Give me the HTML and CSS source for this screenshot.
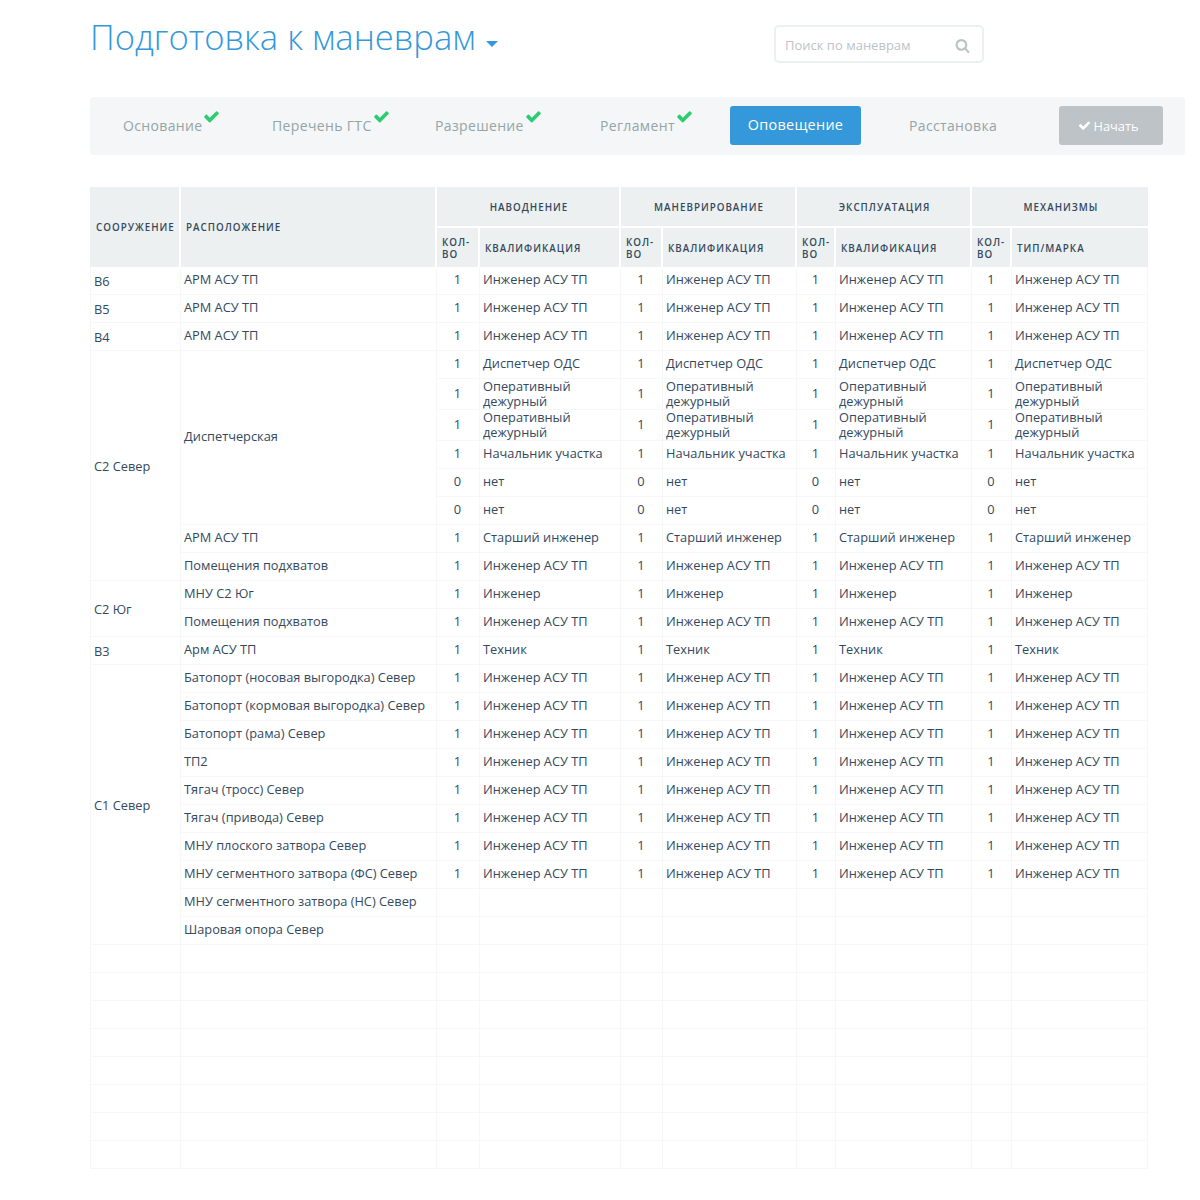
FILE: index.html
```html
<!DOCTYPE html>
<html lang="ru">
<head>
    <meta charset="UTF-8">
    <title>Подготовка к маневрам</title>
    <link rel="stylesheet" href="styles.css">
</head>
<body>
    <svg class="sprite" xmlns="http://www.w3.org/2000/svg">
        <symbol id="i-check" viewBox="0 0 1792 1792"><path d="M1671 566q0 40-28 68l-724 724-136 136q-28 28-68 28t-68-28l-136-136-362-362q-28-28-28-68t28-68l136-136q28-28 68-28t68 28l294 295 656-657q28-28 68-28t68 28l136 136q28 28 28 68z"/></symbol>
        <symbol id="i-search" viewBox="0 0 1792 1792"><path d="M1216 832q0-185-131.5-316.5t-316.5-131.5-316.5 131.5-131.5 316.5 131.5 316.5 316.5 131.5 316.5-131.5 131.5-316.5zm512 832q0 52-38 90t-90 38q-54 0-90-38l-343-342q-179 124-399 124-143 0-273.5-55.5t-225-150-150-225-55.5-273.5 55.5-273.5 150-225 225-150 273.5-55.5 273.5 55.5 225 150 150 225 55.5 273.5q0 220-124 399l343 343q37 37 37 90z"/></symbol>
    </svg>

    <div class="page">
        <div class="top">
            <h1 class="title">Подготовка к маневрам <span class="caret"></span></h1>
            <div class="search">
                <span class="search-text">Поиск по маневрам</span>
                <svg class="search-icon"><use href="#i-search"/></svg>
            </div>
        </div>

        <div class="steps">
            <div class="step">Основание<svg class="done"><use href="#i-check"/></svg></div>
            <div class="step">Перечень ГТС<svg class="done"><use href="#i-check"/></svg></div>
            <div class="step">Разрешение<svg class="done"><use href="#i-check"/></svg></div>
            <div class="step">Регламент<svg class="done"><use href="#i-check"/></svg></div>
            <div class="step-active">Оповещение</div>
            <div class="step">Расстановка</div>
            <div class="start"><svg class="start-icon"><use href="#i-check"/></svg>Начать</div>
        </div>

        <table class="grid">
            <colgroup>
                <col class="c-site"><col class="c-place">
                <col class="c-n1"><col class="c-q1">
                <col class="c-n2"><col class="c-q2">
                <col class="c-n3"><col class="c-q3">
                <col class="c-n4"><col class="c-q4">
            </colgroup>
            <thead>
                <tr class="head-1">
                    <th rowspan="2" class="th-site">Сооружение</th>
                    <th rowspan="2">Расположение</th>
                    <th colspan="2" class="group">Наводнение</th>
                    <th colspan="2" class="group">Маневрирование</th>
                    <th colspan="2" class="group">Эксплуатация</th>
                    <th colspan="2" class="group">Механизмы</th>
                </tr>
                <tr class="head-2">
                    <th>Кол-во</th><th>Квалификация</th>
                    <th>Кол-во</th><th>Квалификация</th>
                    <th>Кол-во</th><th>Квалификация</th>
                    <th>Кол-во</th><th>Тип/марка</th>
                </tr>
            </thead>
            <tbody>
                <tr><td class="site">В6</td><td>АРМ АСУ ТП</td><td class="num">1</td><td>Инженер АСУ ТП</td><td class="num">1</td><td>Инженер АСУ ТП</td><td class="num">1</td><td>Инженер АСУ ТП</td><td class="num">1</td><td>Инженер АСУ ТП</td></tr>
                <tr><td class="site">В5</td><td>АРМ АСУ ТП</td><td class="num">1</td><td>Инженер АСУ ТП</td><td class="num">1</td><td>Инженер АСУ ТП</td><td class="num">1</td><td>Инженер АСУ ТП</td><td class="num">1</td><td>Инженер АСУ ТП</td></tr>
                <tr><td class="site">В4</td><td>АРМ АСУ ТП</td><td class="num">1</td><td>Инженер АСУ ТП</td><td class="num">1</td><td>Инженер АСУ ТП</td><td class="num">1</td><td>Инженер АСУ ТП</td><td class="num">1</td><td>Инженер АСУ ТП</td></tr>

                <tr><td class="site" rowspan="8">С2 Север</td><td rowspan="6">Диспетчерская</td><td class="num">1</td><td>Диспетчер ОДС</td><td class="num">1</td><td>Диспетчер ОДС</td><td class="num">1</td><td>Диспетчер ОДС</td><td class="num">1</td><td>Диспетчер ОДС</td></tr>
                <tr class="tall"><td class="num">1</td><td>Оперативный дежурный</td><td class="num">1</td><td>Оперативный дежурный</td><td class="num">1</td><td>Оперативный дежурный</td><td class="num">1</td><td>Оперативный дежурный</td></tr>
                <tr class="tall"><td class="num">1</td><td>Оперативный дежурный</td><td class="num">1</td><td>Оперативный дежурный</td><td class="num">1</td><td>Оперативный дежурный</td><td class="num">1</td><td>Оперативный дежурный</td></tr>
                <tr><td class="num">1</td><td>Начальник участка</td><td class="num">1</td><td>Начальник участка</td><td class="num">1</td><td>Начальник участка</td><td class="num">1</td><td>Начальник участка</td></tr>
                <tr><td class="num">0</td><td>нет</td><td class="num">0</td><td>нет</td><td class="num">0</td><td>нет</td><td class="num">0</td><td>нет</td></tr>
                <tr><td class="num">0</td><td>нет</td><td class="num">0</td><td>нет</td><td class="num">0</td><td>нет</td><td class="num">0</td><td>нет</td></tr>
                <tr><td>АРМ АСУ ТП</td><td class="num">1</td><td>Старший инженер</td><td class="num">1</td><td>Старший инженер</td><td class="num">1</td><td>Старший инженер</td><td class="num">1</td><td>Старший инженер</td></tr>
                <tr><td>Помещения подхватов</td><td class="num">1</td><td>Инженер АСУ ТП</td><td class="num">1</td><td>Инженер АСУ ТП</td><td class="num">1</td><td>Инженер АСУ ТП</td><td class="num">1</td><td>Инженер АСУ ТП</td></tr>

                <tr><td class="site" rowspan="2">С2 Юг</td><td>МНУ С2 Юг</td><td class="num">1</td><td>Инженер</td><td class="num">1</td><td>Инженер</td><td class="num">1</td><td>Инженер</td><td class="num">1</td><td>Инженер</td></tr>
                <tr><td>Помещения подхватов</td><td class="num">1</td><td>Инженер АСУ ТП</td><td class="num">1</td><td>Инженер АСУ ТП</td><td class="num">1</td><td>Инженер АСУ ТП</td><td class="num">1</td><td>Инженер АСУ ТП</td></tr>

                <tr><td class="site">В3</td><td>Арм АСУ ТП</td><td class="num">1</td><td>Техник</td><td class="num">1</td><td>Техник</td><td class="num">1</td><td>Техник</td><td class="num">1</td><td>Техник</td></tr>

                <tr><td class="site" rowspan="10">С1 Север</td><td>Батопорт (носовая выгородка) Север</td><td class="num">1</td><td>Инженер АСУ ТП</td><td class="num">1</td><td>Инженер АСУ ТП</td><td class="num">1</td><td>Инженер АСУ ТП</td><td class="num">1</td><td>Инженер АСУ ТП</td></tr>
                <tr><td>Батопорт (кормовая выгородка) Север</td><td class="num">1</td><td>Инженер АСУ ТП</td><td class="num">1</td><td>Инженер АСУ ТП</td><td class="num">1</td><td>Инженер АСУ ТП</td><td class="num">1</td><td>Инженер АСУ ТП</td></tr>
                <tr><td>Батопорт (рама) Север</td><td class="num">1</td><td>Инженер АСУ ТП</td><td class="num">1</td><td>Инженер АСУ ТП</td><td class="num">1</td><td>Инженер АСУ ТП</td><td class="num">1</td><td>Инженер АСУ ТП</td></tr>
                <tr><td>ТП2</td><td class="num">1</td><td>Инженер АСУ ТП</td><td class="num">1</td><td>Инженер АСУ ТП</td><td class="num">1</td><td>Инженер АСУ ТП</td><td class="num">1</td><td>Инженер АСУ ТП</td></tr>
                <tr><td>Тягач (тросс) Север</td><td class="num">1</td><td>Инженер АСУ ТП</td><td class="num">1</td><td>Инженер АСУ ТП</td><td class="num">1</td><td>Инженер АСУ ТП</td><td class="num">1</td><td>Инженер АСУ ТП</td></tr>
                <tr><td>Тягач (привода) Север</td><td class="num">1</td><td>Инженер АСУ ТП</td><td class="num">1</td><td>Инженер АСУ ТП</td><td class="num">1</td><td>Инженер АСУ ТП</td><td class="num">1</td><td>Инженер АСУ ТП</td></tr>
                <tr><td>МНУ плоского затвора Север</td><td class="num">1</td><td>Инженер АСУ ТП</td><td class="num">1</td><td>Инженер АСУ ТП</td><td class="num">1</td><td>Инженер АСУ ТП</td><td class="num">1</td><td>Инженер АСУ ТП</td></tr>
                <tr><td>МНУ сегментного затвора (ФС) Север</td><td class="num">1</td><td>Инженер АСУ ТП</td><td class="num">1</td><td>Инженер АСУ ТП</td><td class="num">1</td><td>Инженер АСУ ТП</td><td class="num">1</td><td>Инженер АСУ ТП</td></tr>
                <tr><td>МНУ сегментного затвора (НС) Север</td><td></td><td></td><td></td><td></td><td></td><td></td><td></td><td></td></tr>
                <tr><td>Шаровая опора Север</td><td></td><td></td><td></td><td></td><td></td><td></td><td></td><td></td></tr>

                <tr><td class="site"></td><td></td><td></td><td></td><td></td><td></td><td></td><td></td><td></td><td></td></tr>
                <tr><td class="site"></td><td></td><td></td><td></td><td></td><td></td><td></td><td></td><td></td><td></td></tr>
                <tr><td class="site"></td><td></td><td></td><td></td><td></td><td></td><td></td><td></td><td></td><td></td></tr>
                <tr><td class="site"></td><td></td><td></td><td></td><td></td><td></td><td></td><td></td><td></td><td></td></tr>
                <tr><td class="site"></td><td></td><td></td><td></td><td></td><td></td><td></td><td></td><td></td><td></td></tr>
                <tr><td class="site"></td><td></td><td></td><td></td><td></td><td></td><td></td><td></td><td></td><td></td></tr>
                <tr><td class="site"></td><td></td><td></td><td></td><td></td><td></td><td></td><td></td><td></td><td></td></tr>
                <tr><td class="site"></td><td></td><td></td><td></td><td></td><td></td><td></td><td></td><td></td><td></td></tr>
            </tbody>
        </table>
    </div>
</body>
</html>
```

FILE: styles.css
```css
body {
    margin: 0;
    background-color: #fff;
    color: #34495e;
    font-family: "Open Sans", sans-serif;
    font-size: 12.8px;
}

.sprite {
    display: none;
}

.page {
    width: 1095px;
    margin-left: 90px;
}

/* Titre + recherche */
.top {
    display: flex;
    align-items: flex-start;
    height: 97px;
}

.title {
    width: 684px;
    margin: 12px 0 0;
    color: #3498db;
    font-size: 34.6px;
    font-weight: 300;
    line-height: 49px;
    white-space: nowrap;
}

.caret {
    display: inline-block;
    margin-left: 1px;
    vertical-align: 3px;
    border-top: 6px solid #3498db;
    border-left: 6px solid transparent;
    border-right: 6px solid transparent;
}

.search {
    box-sizing: border-box;
    display: flex;
    align-items: center;
    justify-content: space-between;
    width: 210px;
    height: 38px;
    margin-top: 25px;
    padding: 2px 12px 0 9px;
    background-color: #fff;
    border: 2px solid #ecf0f1;
    border-radius: 5px;
}

.search-text {
    color: #bdc3c7;
    font-size: 13px;
}

.search-icon {
    width: 15px;
    height: 15px;
    fill: #bdc3c7;
}

/* Etapes */
.steps {
    display: grid;
    grid-template-columns: 149px 163px 165px 130px 179px 150px 104px;
    align-items: center;
    height: 58px;
    padding: 0 0 1px 33px;
    box-sizing: border-box;
    background-color: #f4f6f7;
    border-radius: 3px;
}

.step {
    display: flex;
    align-items: center;
    height: 20px;
    color: #95a5a6;
    font-size: 14px;
    letter-spacing: 0.35px;
    white-space: nowrap;
}

.done {
    width: 17px;
    height: 17px;
    margin: -19px 0 0 1px;
    fill: #2ecc71;
}

.step-active {
    width: 131px;
    height: 39px;
    color: #fff;
    background-color: #3498db;
    border-radius: 3px;
    font-size: 14.4px;
    letter-spacing: 0.3px;
    line-height: 37px;
    text-align: center;
}

.start {
    box-sizing: border-box;
    display: flex;
    align-items: center;
    justify-content: center;
    height: 39px;
    padding-right: 6px;
    color: #fff;
    background-color: #bdc3c7;
    border-radius: 3px;
    font-size: 12.8px;
}

.start-icon {
    width: 13px;
    height: 13px;
    margin-right: 3px;
    fill: #fff;
}

/* Tableau */
.grid {
    width: 1058px;
    margin-top: 32px;
    table-layout: fixed;
    border-collapse: separate;
    border-spacing: 0;
}

.c-site { width: 91px; }
.c-place { width: 256px; }
.c-n1 { width: 43px; }
.c-q1 { width: 141px; }
.c-n2 { width: 42px; }
.c-q2 { width: 134px; }
.c-n3 { width: 39px; }
.c-q3 { width: 136px; }
.c-n4 { width: 40px; }
.c-q4 { width: 136px; }

.grid th {
    padding: 2px 5px 0;
    background-color: #ecf0f1;
    border-right: 2px solid #fff;
    border-bottom: 2px solid #fff;
    color: #34495e;
    font-size: 9.8px;
    font-weight: 600;
    letter-spacing: 1px;
    line-height: 12px;
    text-align: left;
    text-transform: uppercase;
}

.grid th:last-child {
    border-right: 0;
}

.grid th.th-site {
    padding-left: 6px;
}

.grid th.group {
    padding-left: 7px;
    text-align: center;
}

.grid th[rowspan] {
    border-bottom: 0;
}

.head-2 th {
    border-bottom: 0;
}

.head-1 {
    height: 41px;
}

.head-2 {
    height: 39px;
}

.grid td {
    padding: 0 3px 2px;
    border-right: 1px solid #f6f8f8;
    border-bottom: 1px solid #f6f8f8;
    line-height: 15.6px;
}

.grid tbody tr {
    height: 28px;
}

.grid tbody tr.tall {
    height: 31px;
}

.grid tr.tall td {
    padding-bottom: 0;
    line-height: 15px;
}

.grid td.site {
    padding-top: 2px;
    padding-bottom: 0;
    border-left: 1px solid #f6f8f8;
}

.grid td.num {
    padding-left: 0;
    padding-right: 1px;
    text-align: center;
}

.grid tr.tall td.num {
    padding-bottom: 2px;
}
```
